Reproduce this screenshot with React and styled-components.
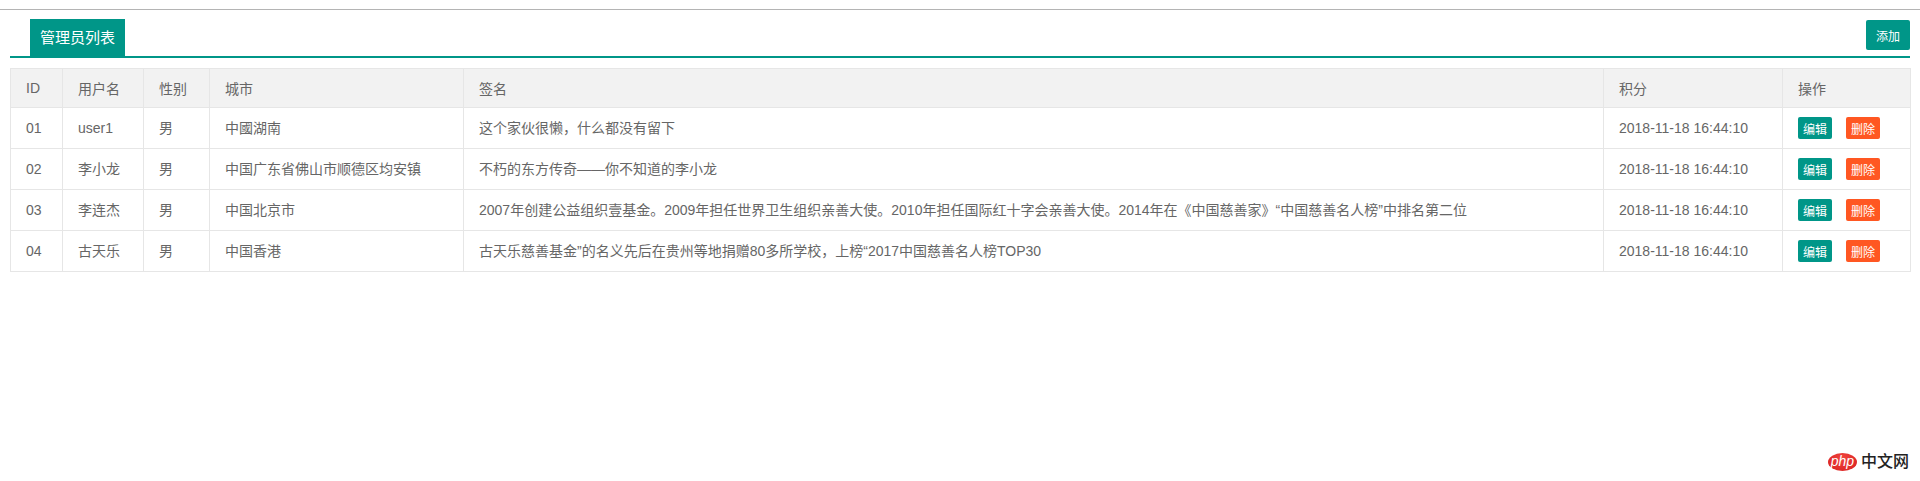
import React from 'react';
import styled, { createGlobalStyle } from 'styled-components';

const GlobalStyle = createGlobalStyle`
  html, body {
    margin: 0;
    padding: 0;
    background: #fff;
    font-family: "Liberation Sans", "Noto Sans CJK SC", sans-serif;
    font-size: 14px;
    color: #666;
  }
`;

const Page = styled.div`
  position: relative;
  height: 481px;
  overflow: hidden;
  padding-top: 9px;
  box-sizing: border-box;
`;

const TopRule = styled.div`
  height: 1px;
  background: #b4b4b4;
`;

const Content = styled.div`
  padding: 0 10px;
`;

const TitleBar = styled.div`
  display: flex;
  justify-content: space-between;
  align-items: flex-start;
  height: 37px;
  padding: 9px 0 0 20px;
  margin-bottom: 10px;
  border-bottom: 2px solid #009688;
`;

const TitleTab = styled.div`
  height: 37px;
  line-height: 37px;
  padding: 0 10px;
  background: #009688;
  color: #fff;
  font-size: 15px;
`;

const Button = styled.button`
  border: 0;
  padding: 0;
  border-radius: 2px;
  color: #fff;
  font-family: inherit;
  font-size: 12px;
  text-align: center;
  background: ${({ $danger }) => ($danger ? '#ff5722' : '#009688')};
`;

const AddButton = styled(Button)`
  width: 44px;
  height: 30px;
  margin-top: 1px;
`;

const ActionButton = styled(Button)`
  width: 34px;
  height: 22px;
  & + & {
    margin-left: 14px;
  }
`;

const Table = styled.table`
  width: 1900px;
  table-layout: fixed;
  border-collapse: collapse;
  border: 1px solid #e6e6e6;
`;

const HeadCell = styled.th`
  width: ${({ $w }) => $w}px;
  height: 39px;
  padding: 0 15px;
  box-sizing: border-box;
  border: 1px solid #e6e6e6;
  background: #f2f2f2;
  font-weight: 400;
  text-align: left;
  color: #666;
`;

const Cell = styled.td`
  height: 41px;
  padding: 0 15px;
  box-sizing: border-box;
  border: 1px solid #e6e6e6;
  line-height: 20px;
  color: #666;
  white-space: nowrap;
`;

const Watermark = styled.div`
  position: absolute;
  right: 11px;
  bottom: 10px;
  display: flex;
  align-items: center;
  gap: 4px;
`;

const PhpBadge = styled.span`
  width: 29px;
  height: 18px;
  line-height: 17px;
  border-radius: 50%;
  background: radial-gradient(ellipse at 50% 30%, #f0453f, #d81e1e);
  color: #fff;
  font-size: 14px;
  font-style: italic;
  text-align: center;
`;

const WatermarkText = styled.span`
  color: #222;
  font-size: 16px;
  line-height: 18px;
  font-weight: 500;
`;

const columns = [
  { label: 'ID', width: 52 },
  { label: '用户名', width: 81 },
  { label: '性别', width: 66 },
  { label: '城市', width: 254 },
  { label: '签名', width: 1140 },
  { label: '积分', width: 179 },
  { label: '操作', width: 128 },
];

const rows = [
  ['01', 'user1', '男', '中國湖南', '这个家伙很懒，什么都没有留下'],
  ['02', '李小龙', '男', '中国广东省佛山市顺德区均安镇', '不朽的东方传奇——你不知道的李小龙'],
  ['03', '李连杰', '男', '中国北京市', '2007年创建公益组织壹基金。2009年担任世界卫生组织亲善大使。2010年担任国际红十字会亲善大使。2014年在《中国慈善家》“中国慈善名人榜”中排名第二位'],
  ['04', '古天乐', '男', '中国香港', '古天乐慈善基金”的名义先后在贵州等地捐赠80多所学校，上榜“2017中国慈善名人榜TOP30'],
];

export default function App() {
  return (
    <Page>
      <GlobalStyle />
      <TopRule />
      <Content>
        <TitleBar>
          <TitleTab>管理员列表</TitleTab>
          <AddButton>添加</AddButton>
        </TitleBar>
        <Table>
          <thead>
            <tr>
              {columns.map((col) => (
                <HeadCell key={col.label} $w={col.width}>{col.label}</HeadCell>
              ))}
            </tr>
          </thead>
          <tbody>
            {rows.map((row) => (
              <tr key={row[0]}>
                {row.map((value, i) => (
                  <Cell key={i}>{value}</Cell>
                ))}
                <Cell>2018-11-18 16:44:10</Cell>
                <Cell>
                  <ActionButton>编辑</ActionButton>
                  <ActionButton $danger>删除</ActionButton>
                </Cell>
              </tr>
            ))}
          </tbody>
        </Table>
      </Content>
      <Watermark>
        <PhpBadge>php</PhpBadge>
        <WatermarkText>中文网</WatermarkText>
      </Watermark>
    </Page>
  );
}
